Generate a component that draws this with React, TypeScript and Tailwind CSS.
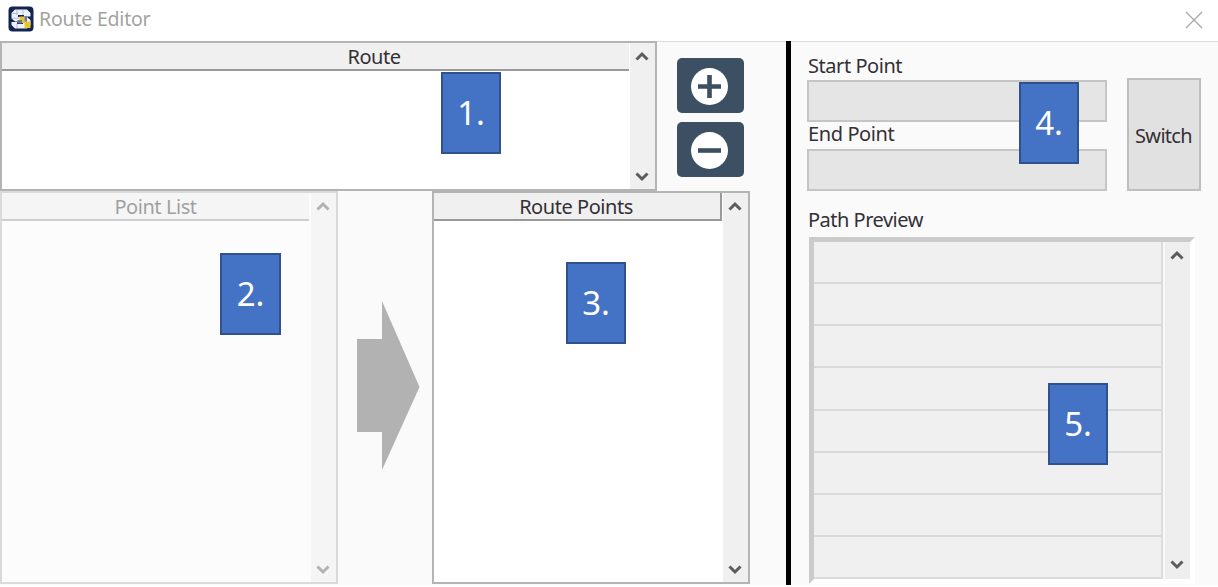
import type { ReactNode } from "react";

function Chevron({ down = false }: { down?: boolean }) {
  return (
    <svg width="14" height="12" viewBox="0 0 14 12" fill="none" className="shrink-0">
      <path d={down ? "M1.5 2.5 L7 8 L12.5 2.5" : "M1.5 9.5 L7 4 L12.5 9.5"} stroke="#5c5c5c" strokeWidth="3" />
    </svg>
  );
}

function AppIcon() {
  return (
    <svg width="26" height="26" viewBox="0 0 26 26" className="shrink-0">
      <rect x="0.5" y="0.5" width="25" height="25" rx="4" fill="#122452" />
      <path d="M7 3.5 H19 L22.5 7 V10.5 H16 V9 H10 V11 H19 L22.5 14 V19 L19 22.5 H7 L3.5 19 V16 H9 V18 H15 V15.5 H7 L3.5 12.5 V7 Z" fill="#eef2fa" />
      <path d="M9 4 V9 M15 4 V9 M9 18 V22 M4 12.2 H11 M4 7.5 H10" stroke="#b4bed6" strokeWidth="1" />
      <path d="M11.5 10.5 H16.5 V15.5 H22.5 V22 H16.5 V17 H11.5 Z" fill="#e9c52d" />
      <path d="M9.5 14 H14 V17.5 H9.5 Z M16.5 11 H19 V15.5 H16.5 Z" fill="#6d7787" />
    </svg>
  );
}

function RoundButton({ plus = false }: { plus?: boolean }) {
  return (
    <button className="flex h-[55px] w-[67px] items-center justify-center rounded-[5px] bg-[#3d4f63] pr-[5px]">
      <svg width="39" height="39" viewBox="0 0 39 39" className="mt-px">
        <circle cx="20.5" cy="19.5" r="18.5" fill="#fff" />
        <path d={plus ? "M9 19.5 H32 M20.5 8 V31" : "M9 19.5 H32"} stroke="#3d4f63" strokeWidth="4.6" />
      </svg>
    </button>
  );
}

function ListBox({ className, header, children }: { className: string; header: string; children: ReactNode }) {
  return (
    <section className={"flex border-2 border-[#b4b4b4] bg-white " + className}>
      <div className="flex-1">
        <div className={"flex h-[28px] items-center justify-center border-b-2 border-[#999] bg-[#f0f0f0] pt-[2px] " + header}>
          {children}
        </div>
      </div>
      <div className="flex w-[25px] flex-col items-center justify-between bg-[#f0f0f0] pt-[7px] pr-px pb-[6px]">
        <Chevron />
        <Chevron down />
      </div>
    </section>
  );
}

function Badge({ className, children }: { className: string; children: string }) {
  return (
    <div className={"absolute flex h-[82px] items-center justify-center border-2 border-[#2f528f] bg-[#4472c4] pb-[1px] text-[33px] leading-none text-white " + className}>
      {children}
    </div>
  );
}

export default function App() {
  return (
    <div className="relative flex h-[587px] w-[1218px] flex-col overflow-hidden bg-white font-['Noto_Sans','Open_Sans',sans-serif] text-[20px] leading-[24px] text-[#343036]">
      <header className="flex h-[41px] shrink-0 items-center justify-between pr-[15px] pb-[3px] pl-[8px]">
        <div className="flex items-center gap-[5px]">
          <AppIcon />
          <h1 className="-mt-px text-[19.5px] tracking-[-0.2px] text-[#a3a3a3]">Route Editor</h1>
        </div>
        <svg width="18" height="18" viewBox="0 0 18 18" className="mt-[2px]">
          <path d="M1 1 L17 17 M17 1 L1 17" stroke="#aaa" strokeWidth="1.4" />
        </svg>
      </header>
      <main className="flex h-[544px] shrink-0 bg-[#fafafa]">
        <div className="flex w-[786px] flex-col">
          <div className="flex h-[150px] border-t border-[#dedede]">
            <ListBox className="-mt-px h-[150px] w-[657px]" header="mr-px pl-[117px]">
              <span className="tracking-[-0.5px]">Route</span>
            </ListBox>
            <div className="mt-[16px] ml-[20px] flex flex-col gap-[9px]">
              <RoundButton plus />
              <RoundButton />
            </div>
          </div>
          <div className="flex">
            <ListBox className="h-[393px] w-[338px] opacity-45" header="mr-[2px]">
              <span className="tracking-[-0.45px]">Point List</span>
            </ListBox>
            <svg width="63" height="171" viewBox="0 0 63 171" className="mt-[109px] ml-[19px]">
              <path d="M0 39 H25 V1 L62.5 87 L25 170 V132 H0 Z" fill="#b2b2b2" />
            </svg>
            <ListBox className="ml-[12px] h-[393px] w-[318px]" header="mr-px border-r-2 pr-[2px]">
              <span className="tracking-[-0.45px]">Route Points</span>
            </ListBox>
          </div>
        </div>
        <div className="w-[5px] bg-black" />
        <div className="flex-1 border-t border-[#dedede] pl-[16px]">
          <div className="flex">
            <div className="w-[300px]">
              <label className="mt-[11px] block h-[27px] pt-px pl-[1px] tracking-[-0.45px]">Start Point</label>
              <div className="h-[42px] border-2 border-[#c5c5c5] bg-[#e5e5e5]" />
              <label className="block h-[27px] pl-[1px] tracking-[-0.4px]">End Point</label>
              <div className="h-[42px] border-2 border-[#c5c5c5] bg-[#e5e5e5]" />
            </div>
            <button className="mt-[36px] ml-[20px] h-[113px] w-[74px] border-2 border-[#bebebe] bg-[#e1e1e1] pt-[2px] pr-px tracking-[-0.7px]">Switch</button>
          </div>
          <div className="mt-[16px] h-[30px] pt-px pl-[1px] tracking-[-0.5px]">Path Preview</div>
          <div className="ml-[2px] flex h-[347px] w-[386px] border-[5px] border-t-[#cbcbcb] border-r-white border-b-white border-l-[#cbcbcb] bg-[#f0f0f0]">
            <div className="grid w-[349px] grid-rows-8 border-r-2 border-[#dcdcdc]">
              {[1, 2, 3, 4, 5, 6, 7, 8].map((row) => (
                <div key={row} className="border-b-2 border-[#dadada]" />
              ))}
            </div>
            <div className="flex flex-1 flex-col items-center justify-between border-l-2 border-[#f8f8f8] bg-[#eee] pt-[7px] pr-[2px] pb-[8px]">
              <Chevron />
              <Chevron down />
            </div>
          </div>
        </div>
      </main>
      <Badge className="top-[72px] left-[441px] w-[60px]">1.</Badge>
      <Badge className="top-[253px] left-[220px] w-[61px]">2.</Badge>
      <Badge className="top-[262px] left-[566px] w-[60px]">3.</Badge>
      <Badge className="top-[82px] left-[1019px] w-[60px]">4.</Badge>
      <Badge className="top-[383px] left-[1048px] w-[60px]">5.</Badge>
    </div>
  );
}
